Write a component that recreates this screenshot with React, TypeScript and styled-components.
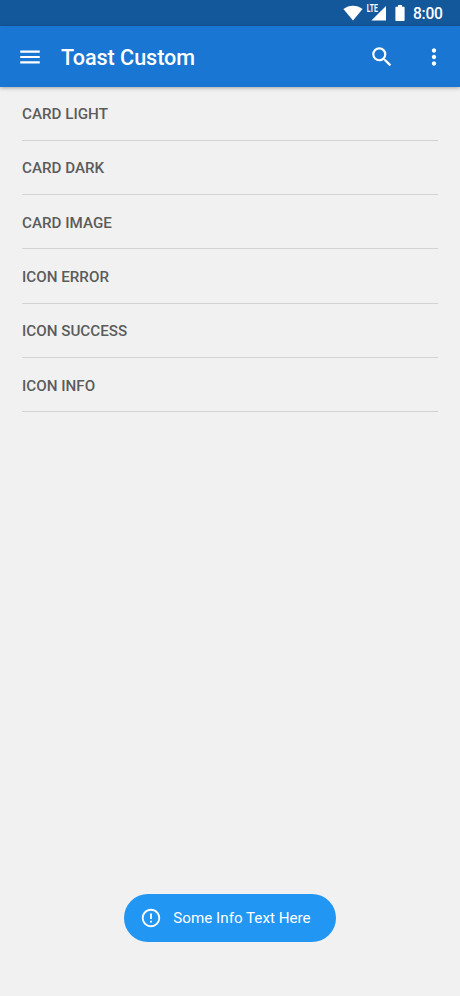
import React from "react";
import styled, { createGlobalStyle } from "styled-components";

const GlobalStyle = createGlobalStyle`
  * { box-sizing: border-box; }
  body {
    margin: 0;
    background: #f1f1f1;
    font-family: Roboto, "Liberation Sans", sans-serif;
  }
`;

const Screen = styled.div`
  display: flex;
  flex-direction: column;
  width: 460px;
  height: 996px;
  overflow: hidden;
  background: #f1f1f1;
`;

const StatusBar = styled.div`
  display: flex;
  flex: none;
  align-items: center;
  justify-content: flex-end;
  height: 26px;
  padding-right: 17px;
  background: #14589c;
`;

const StatusIcons = styled.svg`
  display: block;
  width: 64px;
  height: 26px;
  margin-right: 6px;
`;

const Clock = styled.span`
  width: 30px;
  padding-top: 2px;
  color: #fff;
  font-size: 15.6px;
  font-weight: 500;
  letter-spacing: -0.25px;
  line-height: 24px;
  white-space: nowrap;
`;

const AppBar = styled.header`
  display: flex;
  flex: none;
  align-items: center;
  height: 60.5px;
  padding: 1px 13px 0 17px;
  background: #1976d2;
  color: #fff;
  box-shadow: 0 1px 4px rgba(0, 0, 0, 0.32);
`;

const Title = styled.h1`
  flex: 1;
  margin: 2px 0 0 18px;
  font-size: 21.6px;
  font-weight: 500;
  line-height: 28px;
  letter-spacing: -0.03px;
`;

const IconButton = styled.button<{ $gap?: number }>`
  display: block;
  width: 26px;
  height: 26px;
  margin: 0 ${(p) => p.$gap ?? 0}px 0 0;
  padding: 0;
  border: 0;
  background: none;
  color: inherit;
`;

const Glyph = styled.svg<{ $size: number }>`
  display: block;
  flex: none;
  width: ${(p) => p.$size}px;
  height: ${(p) => p.$size}px;
  fill: currentColor;
`;

const List = styled.ul`
  flex: 1;
  margin: 0;
  padding: 0 22px;
  list-style: none;
`;

const Row = styled.li`
  display: flex;
  align-items: center;
  height: 54.3px;
  padding-top: 2px;
  border-bottom: 1px solid #d3d3d3;
  color: #5c5c5c;
  font-size: 15.2px;
  font-weight: 500;
`;

const ToastArea = styled.div`
  display: flex;
  flex: none;
  justify-content: center;
  padding-bottom: 54.5px;
`;

const Toast = styled.div`
  display: flex;
  align-items: center;
  gap: 11px;
  width: 212px;
  height: 47.5px;
  padding-left: 16.3px;
  border-radius: 24px;
  background: #2196f3;
  color: #fff;
  font-size: 15.2px;
  white-space: nowrap;
`;

const paths = {
  menu: "M3 18h18v-2H3v2zm0-5h18v-2H3v2zm0-7v2h18V6H3z",
  search:
    "M15.5 14h-.79l-.28-.27A6.471 6.471 0 0 0 16 9.5 6.5 6.5 0 1 0 9.5 16c1.61 0 3.09-.59 4.23-1.57l.27.28v.79l5 4.99L20.49 19l-4.99-5zm-6 0C7.01 14 5 11.99 5 9.5S7.01 5 9.5 5 14 7.01 14 9.5 11.99 14 9.5 14z",
  more: "M12 8c1.1 0 2-.9 2-2s-.9-2-2-2-2 .9-2 2 .9 2 2 2zm0 2c-1.1 0-2 .9-2 2s.9 2 2 2 2-.9 2-2-.9-2-2-2zm0 6c-1.1 0-2 .9-2 2s.9 2 2 2 2-.9 2-2-.9-2-2-2z",
  alert:
    "M11 15h2v2h-2zm0-8h2v6h-2zm.99-5C6.47 2 2 6.48 2 12s4.47 10 9.99 10C17.52 22 22 17.52 22 12S17.52 2 11.99 2zM12 20c-4.42 0-8-3.58-8-8s3.58-8 8-8 8 3.58 8 8-3.58 8-8 8z",
};

const Icon = ({ name, size = 26 }: { name: keyof typeof paths; size?: number }) => (
  <Glyph $size={size} viewBox="0 0 24 24" aria-hidden="true">
    <path d={paths[name]} />
  </Glyph>
);

const items = ["CARD LIGHT", "CARD DARK", "CARD IMAGE", "ICON ERROR", "ICON SUCCESS", "ICON INFO"];

export default function App() {
  return (
    <>
      <GlobalStyle />
      <Screen>
        <StatusBar>
          <StatusIcons viewBox="343 0 64 26" fill="#fff" aria-hidden="true">
            <path d="M343.400 9C348.800 4.500 357.200 4.500 362.600 9L353 20.600z" />
            <path d="M386 6v14.600h-14.600z" />
            <text
              x="366.8"
              y="12.400"
              fontSize="10"
              fontWeight="700"
              fontFamily="Roboto, sans-serif"
              textLength="11"
              lengthAdjust="spacingAndGlyphs"
            >
              LTE
            </text>
            <path d="M398 5h4v1.700h1.600c.6 0 1 .4 1 1V20c0 .6-.4 1-1 1h-7.200c-.6 0-1-.4-1-1V7.700c0-.6.4-1 1-1H398z" />
          </StatusIcons>
          <Clock>8:00</Clock>
        </StatusBar>
        <AppBar>
          <IconButton aria-label="Menu">
            <Icon name="menu" />
          </IconButton>
          <Title>Toast Custom</Title>
          <IconButton aria-label="Search" $gap={26.3}>
            <Icon name="search" />
          </IconButton>
          <IconButton aria-label="More">
            <Icon name="more" />
          </IconButton>
        </AppBar>
        <List>
          {items.map((item) => (
            <Row key={item}>{item}</Row>
          ))}
        </List>
        <ToastArea>
          <Toast role="status">
            <Icon name="alert" size={22} />
            Some Info Text Here
          </Toast>
        </ToastArea>
      </Screen>
    </>
  );
}
